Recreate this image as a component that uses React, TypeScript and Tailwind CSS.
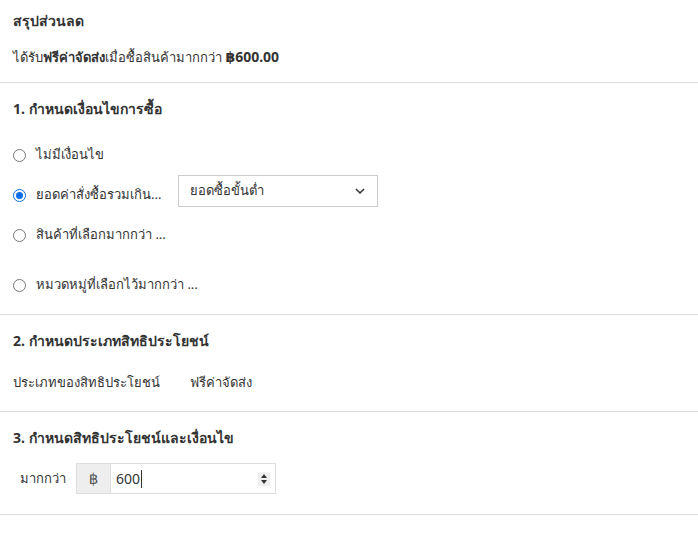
import React from "react";

const font = { fontFamily: '"Noto Sans", "Open Sans", "DejaVu Sans", sans-serif' };

function Radio({ checked }: { checked?: boolean }) {
  return checked ? (
    <span className="w-[13px] h-[13px] rounded-full border-[1.5px] border-[#0b6ee6] flex items-center justify-center shrink-0">
      <span className="w-[7px] h-[7px] rounded-full bg-[#0b6ee6]" />
    </span>
  ) : (
    <span className="w-[13px] h-[13px] rounded-full border border-[#767676] shrink-0" />
  );
}

export default function App() {
  const options = [
    { label: "ไม่มีเงื่อนไข" },
    { label: "ยอดค่าสั่งซื้อรวมเกิน...", checked: true, select: true },
    { label: "สินค้าที่เลือกมากกว่า ..." },
    { label: "หมวดหมู่ที่เลือกไว้มากกว่า ...", gap: true },
  ];

  return (
    <div className="w-[698px] h-[537px] bg-white text-[#333] text-[13px]" style={font}>
      {/* summary */}
      <section className="px-[13px] pt-[10px] pb-[14px] border-b border-[#ddd]">
        <h2 className="font-bold text-sm leading-[22px]">สรุปส่วนลด</h2>
        <p className="mt-[14px] leading-[22px]">
          ได้รับ<b>ฟรีค่าจัดส่ง</b>เมื่อซื้อสินค้ามากกว่า <b className="text-sm">฿600.00</b>
        </p>
      </section>

      {/* 1 */}
      <section className="px-[13px] pt-[15px] pb-[9px] border-b border-[#ddd]">
        <h3 className="font-bold text-sm leading-[22px]">1. กำหนดเงื่อนไขการซื้อ</h3>
        <div className="mt-[15px] flex flex-col">
          {options.map((o) => (
            <div key={o.label} className={`flex items-center h-[40px] ${o.gap ? "mt-[10px]" : ""}`}>
              <Radio checked={o.checked} />
              <span className={`ml-[10px] ${o.select ? "w-[142px]" : ""}`}>{o.label}</span>
              {o.select && (
                <div className="mb-[8px] w-[200px] h-[32px] border border-[#ccc] flex items-center justify-between px-[11px]">
                  <span>ยอดซื้อขั้นต่ำ</span>
                  <svg width="12" height="12" viewBox="0 0 12 12" fill="none" stroke="#333" strokeWidth="1.5">
                    <path d="M2 4l4 4 4-4" />
                  </svg>
                </div>
              )}
            </div>
          ))}
        </div>
      </section>

      {/* 2 */}
      <section className="px-[13px] pt-[15px] pb-[18px] border-b border-[#ddd]">
        <h3 className="font-bold text-sm leading-[22px]">2. กำหนดประเภทสิทธิประโยชน์</h3>
        <div className="mt-[19px] flex leading-[22px]">
          <span className="w-[177px]">ประเภทของสิทธิประโยชน์</span>
          <span>ฟรีค่าจัดส่ง</span>
        </div>
      </section>

      {/* 3 */}
      <section className="px-[13px] pt-[15px] pb-[20px] border-b border-[#ddd]">
        <h3 className="font-bold text-sm leading-[22px]">3. กำหนดสิทธิประโยชน์และเงื่อนไข</h3>
        <div className="mt-[14px] flex items-center">
          <span className="ml-[7px] w-[56px]">มากกว่า</span>
          <div className="flex h-[31px] border border-[#ddd]">
            <span className="w-[34px] bg-[#eee] border-r border-[#ddd] flex items-center justify-center text-[#555] text-[15px]">฿</span>
            <div className="w-[164px] flex items-center justify-between pl-[5px] pr-[5px]">
              <span className="flex items-center text-sm">
                600<span className="w-px h-[18px] bg-[#333] ml-px" />
              </span>
              <svg width="12" height="14" viewBox="0 0 12 14" fill="#333">
                <rect x="0" y="0" width="12" height="14" fill="#f0f0f0" />
                <path d="M3 6l3-4 3 4z" />
                <path d="M3 8l3 4 3-4z" />
              </svg>
            </div>
          </div>
        </div>
      </section>
    </div>
  );
}
